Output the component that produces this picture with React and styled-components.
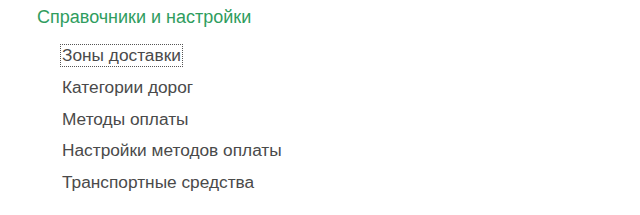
import React from "react";
import styled, { createGlobalStyle } from "styled-components";

const GlobalStyle = createGlobalStyle`
  html, body {
    margin: 0;
    padding: 0;
    background: #fff;
  }
  body {
    font-family: Arial, "Liberation Sans", sans-serif;
  }
`;

const Wrapper = styled.div`
  width: 640px;
  height: 215px;
  box-sizing: border-box;
  padding: 6px 0 0 37px;
`;

const Title = styled.div`
  color: #2f9d5e;
  font-size: 18px;
  line-height: 22px;
`;

const List = styled.ul`
  list-style: none;
  margin: 0;
  padding: 16px 0 0 23px;
  display: flex;
  flex-direction: column;
  align-items: flex-start;
  gap: 8.75px;
`;

const Item = styled.li`
  color: #4a4a4a;
  font-size: 17.3px;
  line-height: 21px;
  padding: 0 1px;
  border: 1px dotted ${(props) => (props.$focused ? "#555" : "transparent")};
`;

const items = [
  "Зоны доставки",
  "Категории дорог",
  "Методы оплаты",
  "Настройки методов оплаты",
  "Транспортные средства",
];

function App() {
  return (
    <Wrapper>
      <GlobalStyle />
      <Title>Справочники и настройки</Title>
      <List>
        {items.map((text, i) => (
          <Item key={text} $focused={i === 0}>
            {text}
          </Item>
        ))}
      </List>
    </Wrapper>
  );
}

export default App;
